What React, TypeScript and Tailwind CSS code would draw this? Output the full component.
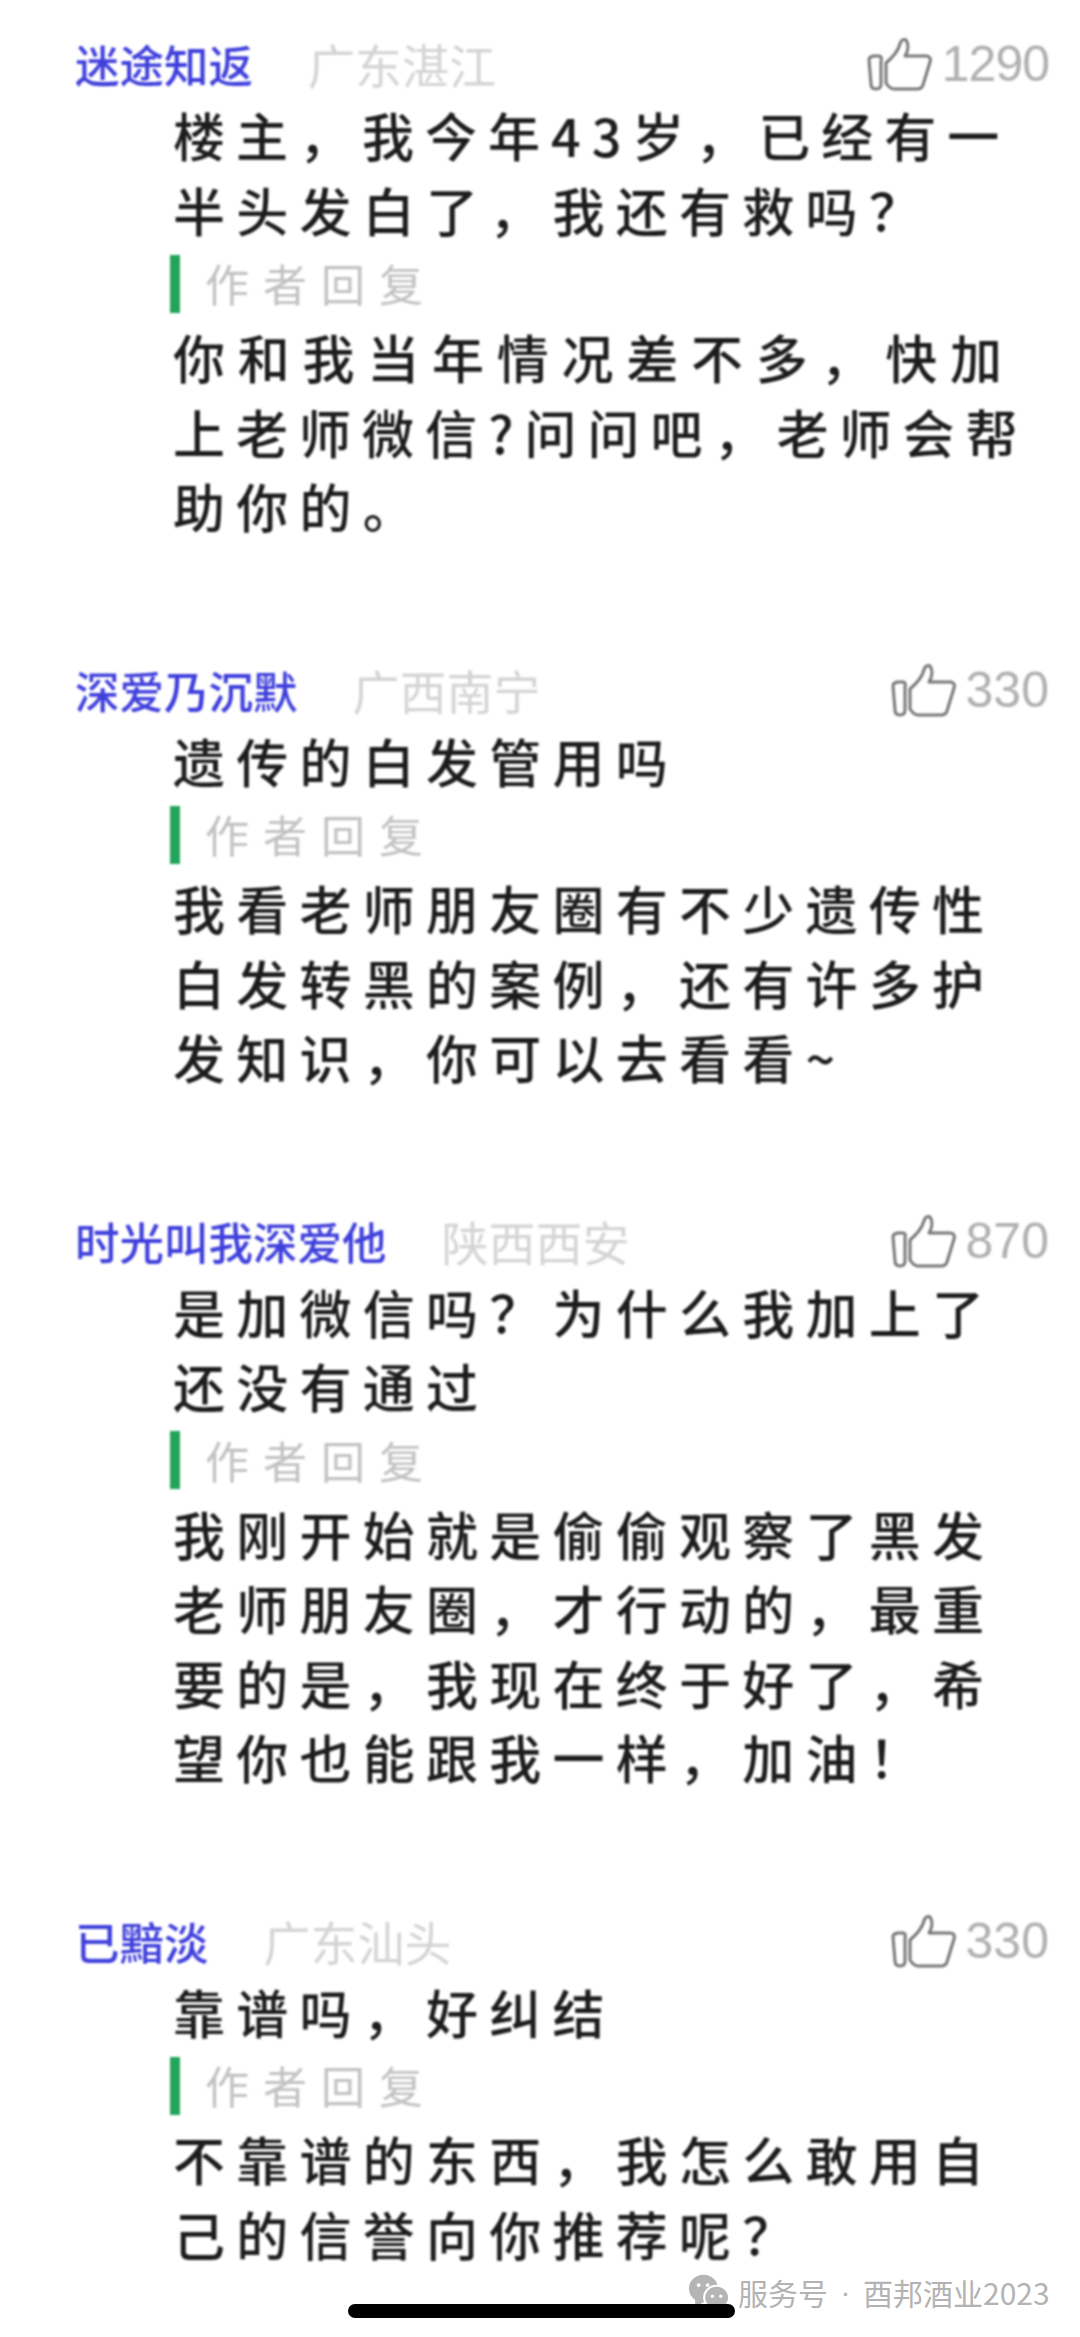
const items = [
  { name: "迷途知返", loc: "广东湛江", likes: "1290", q: ["楼主，我今年43岁，已经有一", "半头发白了，我还有救吗？"], a: ["你和我当年情况差不多，快加", "上老师微信?问问吧，老师会帮", "助你的。"], mt: "mt-[30px]", count: "tracking-[-1px]" },
  { name: "深爱乃沉默", loc: "广西南宁", likes: "330", q: ["遗传的白发管用吗"], a: ["我看老师朋友圈有不少遗传性", "白发转黑的案例，还有许多护", "发知识，你可以去看看~"], mt: "mt-[112px]", count: "" },
  { name: "时光叫我深爱他", loc: "陕西西安", likes: "870", q: ["是加微信吗？为什么我加上了", "还没有通过"], a: ["我刚开始就是偷偷观察了黑发", "老师朋友圈，才行动的，最重", "要的是，我现在终于好了，希", "望你也能跟我一样，加油！"], mt: "mt-[112px]", count: "" },
  { name: "已黯淡", loc: "广东汕头", likes: "330", q: ["靠谱吗，好纠结"], a: ["不靠谱的东西，我怎么敢用自", "己的信誉向你推荐呢？"], mt: "mt-[112px]", count: "" },
];

const tracking: Record<string, string> = {
  "楼主，我今年43岁，已经有一": "tracking-[11px]",
  "上老师微信?问问吧，老师会帮": "tracking-[11px]",
  "你和我当年情况差不多，快加": "tracking-[12.75px]",
};

function Thumb() {
  return (
    <svg width="66" height="56" viewBox="0 0 66 56" fill="none" stroke="#777" strokeWidth="3" strokeLinejoin="round" strokeLinecap="round">
      <path d="M3 24 C3 21 6 20 9 20 L13 20 C15 20 16 22 15 25 L15 48 C15 52 13 53 10 53 C6 53 5 51 5 48 Z" />
      <path d="M20 47 L20 27 C26 22 32 15 34 8 C35 3 40 2 41 6 C43 11 41 17 39 20 L60 20 C64 20 65 23 64 26 L57 49 C56 52 54 53 51 53 L28 53 C24 53 22 50 20 47 Z" />
    </svg>
  );
}

function Line({ children }: { children: string }) {
  return (
    <div className={`h-[74.5px] leading-[74.5px] whitespace-nowrap text-[52px] font-medium text-[#1c1c1c] ${tracking[children] ?? "tracking-[11.25px]"}`}>
      {children}
    </div>
  );
}

export default function App() {
  return (
    <div className="relative w-[1080px] h-[2337px] overflow-hidden bg-white font-['Noto_Sans_CJK_SC','Liberation_Sans',sans-serif]">
      <div className="blur-[1.2px] flex flex-col">
        {items.map((it) => (
          <section key={it.name} className={`${it.mt} pl-[75px] pr-[31px]`}>
            <header className="flex items-center justify-between h-[68px]">
              <div className="flex items-center gap-[55px]">
                <span className="text-[44.5px] font-medium leading-[60px] text-[#3f3fdc] whitespace-nowrap">{it.name}</span>
                <span className="text-[47px] leading-[60px] text-[#d4d4d4] whitespace-nowrap">{it.loc}</span>
              </div>
              <div className="flex items-center gap-[10px]">
                <Thumb />
                <span className={`text-[50px] leading-[60px] text-[#b0b0b0] font-['Liberation_Sans',sans-serif] ${it.count}`}>{it.likes}</span>
              </div>
            </header>
            <div className="pl-[98px]">
              {it.q.map((l) => <Line key={l}>{l}</Line>)}
              <div className="flex items-center h-[73px]">
                <div className="-ml-[3px] w-[10px] h-[58px] bg-[#22a45a]" />
                <span className="ml-[25px] text-[44px] tracking-[14px] leading-[73px] text-[#c2c2c2]">作者回复</span>
              </div>
              {it.a.map((l) => <Line key={l}>{l}</Line>)}
            </div>
          </section>
        ))}
      </div>
      <div className="absolute left-[688px] top-[2274px] flex items-center gap-[8px]">
        <svg width="42" height="36" viewBox="0 0 30 26" className="shrink-0">
          <ellipse cx="11" cy="10.5" rx="10.5" ry="10" fill="#b5b5b5" />
          <path d="M5 17 L5 25 L11 20 Z" fill="#b5b5b5" />
          <circle cx="7.5" cy="8" r="1.4" fill="#fff" />
          <circle cx="14" cy="8" r="1.4" fill="#fff" />
          <ellipse cx="20.5" cy="17" rx="9" ry="8.5" fill="#b5b5b5" stroke="#fff" strokeWidth="1.5" />
          <circle cx="17.5" cy="16" r="1.2" fill="#fff" />
          <circle cx="23.5" cy="16" r="1.2" fill="#fff" />
        </svg>
        <div className="flex items-center text-[30px] leading-[36px] text-[#b3b3b3] whitespace-nowrap">
          <span>服务号</span>
          <span className="w-[35px] text-center font-['Liberation_Sans',sans-serif]">·</span>
          <span>酉邦酒业2023</span>
        </div>
      </div>
      <div className="absolute left-[348px] top-[2304px] w-[387px] h-[14px] rounded-full bg-black" />
    </div>
  );
}
